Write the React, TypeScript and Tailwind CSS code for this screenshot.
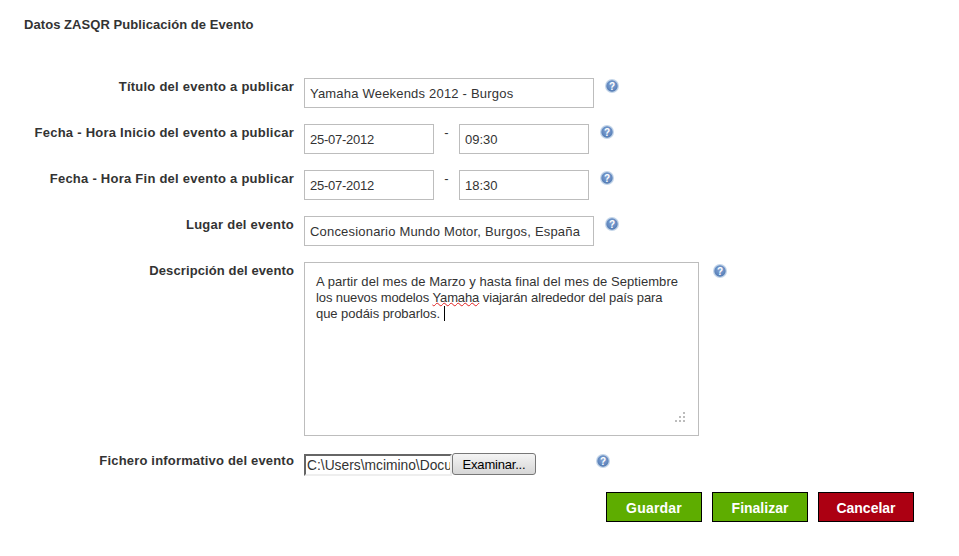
const inputClass =
  "h-[30px] border border-[#bdbdbd] bg-white px-[5px] text-[13px] text-[#333] outline-none";

function HelpIcon({ className = "" }: { className?: string }) {
  return (
    <svg width="14" height="14" viewBox="0 0 14 14" className={"block shrink-0 " + className}>
      <defs>
        <radialGradient id="helpBall" cx="50%" cy="40%" r="60%">
          <stop offset="0%" stopColor="#86a6d4" />
          <stop offset="70%" stopColor="#6389c0" />
          <stop offset="100%" stopColor="#4f77af" />
        </radialGradient>
      </defs>
      <circle cx="7" cy="7" r="7" fill="#c3d5e9" />
      <circle cx="7" cy="7" r="5.7" fill="url(#helpBall)" />
      <text x="7" y="10.6" textAnchor="middle" fontSize="10" fontWeight="700" fontFamily="Liberation Sans, sans-serif" fill="#ffffff">?</text>
    </svg>
  );
}

function Label({ children, className = "mt-px tracking-[0.25px]" }: { children: string; className?: string }) {
  return (
    <div className={"w-[295px] shrink-0 pr-px text-right text-[13px] font-bold leading-[16px] text-[#333] " + className}>
      {children}
    </div>
  );
}

function DateRow({ label, date, time }: { label: string; date: string; time: string }) {
  return (
    <div className="flex h-[30px] items-start">
      <Label>{label}</Label>
      <input readOnly value={date} className={inputClass + " ml-[9px] w-[130px] tracking-[-0.25px]"} />
      <div className="mt-px w-[25px] text-center text-[13px] leading-[16px] text-[#333]">-</div>
      <input readOnly value={time} className={inputClass + " w-[130px]"} />
      <HelpIcon className="ml-[11px] mt-[1px]" />
    </div>
  );
}

export default function App() {
  return (
    <div className="h-[556px] w-[959px] overflow-hidden bg-white pt-[17px] font-['Liberation_Sans',Arial,sans-serif]">
      <h1 className="pl-[24px] text-[13px] font-bold leading-[16px] tracking-[0.06px] text-[#333]">
        Datos ZASQR Publicación de Evento
      </h1>

      <div className="mt-[45px] flex flex-col gap-[16px]">
        <div className="flex h-[30px] items-start">
          <Label>Título del evento a publicar</Label>
          <input readOnly value="Yamaha Weekends 2012 - Burgos" className={inputClass + " ml-[9px] w-[290px] tracking-[0.2px]"} />
          <HelpIcon className="ml-[11px] mt-[1px]" />
        </div>

        <DateRow label="Fecha - Hora Inicio del evento a publicar" date="25-07-2012" time="09:30" />
        <DateRow label="Fecha - Hora Fin del evento a publicar" date="25-07-2012" time="18:30" />

        <div className="flex h-[30px] items-start">
          <Label>Lugar del evento</Label>
          <input readOnly value="Concesionario Mundo Motor, Burgos, España" className={inputClass + " ml-[9px] w-[290px] tracking-[0.19px]"} />
          <HelpIcon className="ml-[11px] mt-[1px]" />
        </div>

        <div className="flex items-start">
          <Label className="mt-px tracking-[0.11px]">Descripción del evento</Label>
          <div className="relative ml-[9px] h-[174px] w-[395px] whitespace-nowrap border border-[#bdbdbd] bg-white p-[11px] text-[13px] leading-[16px] text-[#333]">
            <div className="tracking-[0.06px]">A partir del mes de Marzo y hasta final del mes de Septiembre</div>
            <div className="tracking-[-0.1px]">
              los nuevos modelos{" "}
              <span className="underline decoration-[#e02020] decoration-wavy decoration-1 underline-offset-[0px]">Yamaha</span>{" "}
              viajarán alrededor del país para
            </div>
            <div className="tracking-[-0.05px]">
              que podáis probarlos.{" "}
              <span className="inline-block h-[15px] w-px bg-black align-text-bottom" />
            </div>
            <svg width="11" height="10" viewBox="0 0 11 10" className="absolute bottom-[13px] right-[12px]" fill="#bcbcbc">
              <rect x="8" y="0" width="2" height="2" />
              <rect x="4" y="4" width="2" height="2" />
              <rect x="8" y="4" width="2" height="2" />
              <rect x="0" y="8" width="2" height="2" />
              <rect x="4" y="8" width="2" height="2" />
              <rect x="8" y="8" width="2" height="2" />
            </svg>
          </div>
          <HelpIcon className="ml-[14px] mt-[2px]" />
        </div>

        <div className="mt-[2px] flex items-start">
          <Label className="-mt-px tracking-[0.18px]">Fichero informativo del evento</Label>
          <div className="ml-[9px] flex h-[22px] items-start">
            <input
              readOnly
              value={"C:\\Users\\mcimino\\Documentos"}
              className="h-[22px] w-[148px] border-2 border-b-[#eeeeee] border-l-[#666] border-r-[#eeeeee] border-t-[#666] bg-white pl-px text-[13.8px] leading-[20px] text-[#333] outline-none"
            />
            <button className="-mt-px h-[22px] w-[84px] rounded-[3px] border border-[#777] bg-gradient-to-b from-[#f4f4f4] to-[#d6d6d6] pt-px text-[13px] leading-[18px] tracking-[-0.2px] text-black">
              Examinar...
            </button>
          </div>
          <HelpIcon className="ml-[60px]" />
        </div>
      </div>

      <div className="mt-[16px] flex justify-end gap-[10px] pr-[45px]">
        <button className="h-[30px] w-[96px] border border-black bg-[#5ead00] pt-[2px] text-[14px] font-bold tracking-[0.2px] text-white">Guardar</button>
        <button className="h-[30px] w-[96px] border border-black bg-[#5ead00] pt-[2px] text-[14px] font-bold text-white">Finalizar</button>
        <button className="h-[30px] w-[96px] border border-black bg-[#ac0012] pt-[2px] text-[14px] font-bold text-white">Cancelar</button>
      </div>
    </div>
  );
}
